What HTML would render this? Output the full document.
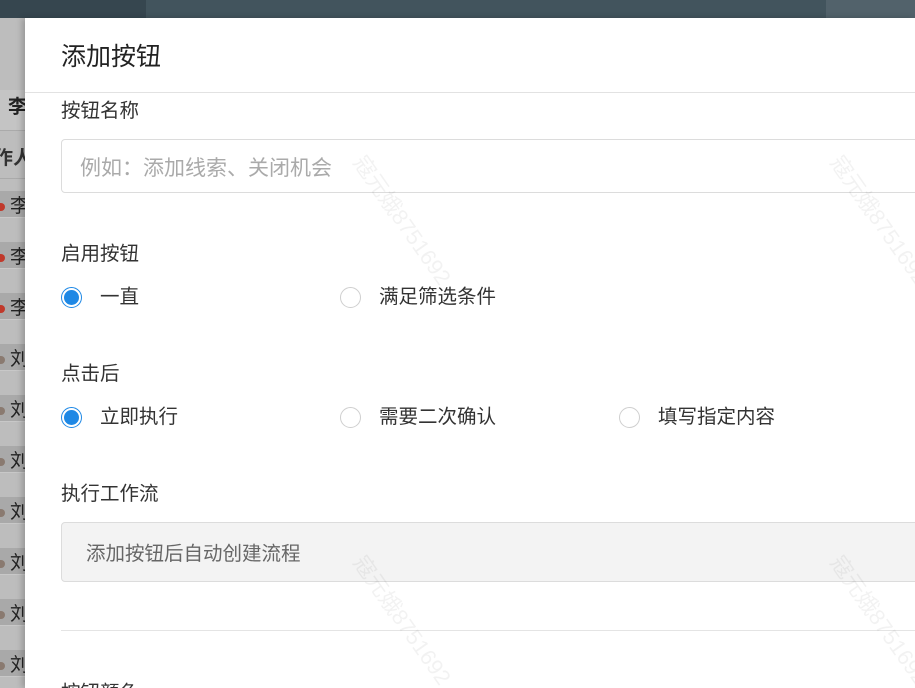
<!DOCTYPE html>
<html><head><meta charset="utf-8">
<style>
*{margin:0;padding:0;box-sizing:border-box}
html,body{width:915px;height:688px;overflow:hidden}
body{position:relative;background:#b4b4b4;font-family:"Liberation Sans","Noto Sans CJK SC",sans-serif;}
.top{position:absolute;left:0;top:0;width:915px;height:18px;background:#42545d}
.top .a{position:absolute;left:0;top:0;width:146px;height:18px;background:#36464f}
.top .b{position:absolute;left:826px;top:0;width:89px;height:18px;background:#52626b}
.side{position:absolute;left:0;top:18px;width:25px;height:670px;background:#bdbdbd;overflow:hidden}
.side div{position:absolute;left:0;width:25px;font-size:19px;color:#222;white-space:nowrap}
.row{height:27px;background:#a9a9a9;border-bottom:1px solid #c8c8c8}
.dot{display:inline-block;width:5px;height:8px;background:#c0392b;border-radius:0 4px 4px 0;vertical-align:middle;margin-right:5px}
.dot.g{background:#8a7a70}
.modal{position:absolute;left:25px;top:18px;width:890px;height:670px;background:#fff;box-shadow:-3px 0 6px rgba(0,0,0,.2);overflow:hidden}
.title{position:absolute;left:36px;top:19px;font-size:25px;color:#222}
.hr{position:absolute;left:0;top:74px;width:900px;height:1px;background:#e2e2e2}
.lbl{position:absolute;left:36px;font-size:19.5px;color:#333}
.input{position:absolute;left:36px;width:880px;border:1px solid #dcdcdc;border-radius:4px;font-size:19.5px}
.radio{position:absolute;font-size:19.5px;color:#333;height:22px;line-height:22px}
.radio i{position:absolute;left:0;top:1px;width:21px;height:21px;border-radius:50%;border:1px solid #cfcfcf;background:#fff}
.radio i.on{border-color:#1e88e5}
.radio i.on:after{content:"";position:absolute;left:2px;top:2px;width:15px;height:15px;border-radius:50%;background:#1e88e5}
.radio span{position:absolute;left:39px;top:0;white-space:nowrap}
.wm{position:absolute;font-size:22px;color:rgba(0,0,0,.05);transform:rotate(55deg);transform-origin:0 0;white-space:nowrap}
</style></head><body>
<div class="top"><div class="a"></div><div class="b"></div></div>
<div class="side">
<div style="top:72px;height:40px;background:#c4c4c4;font-weight:bold;padding:2px 0 0 8px">李</div>
<div style="top:112px;height:1px;background:#aaa"></div>
<div style="top:125px;font-weight:bold;left:-6px;color:#333">作人</div>
<div style="top:160px;height:1px;background:#aaa"></div>
<div class="row" style="top:173px;"><span class="dot"></span>李</div>
<div class="row" style="top:224px;"><span class="dot"></span>李</div>
<div class="row" style="top:275px;"><span class="dot"></span>李</div>
<div class="row" style="top:326px;"><span class="dot g"></span>刘</div>
<div class="row" style="top:377px;"><span class="dot g"></span>刘</div>
<div class="row" style="top:428px;"><span class="dot g"></span>刘</div>
<div class="row" style="top:479px;"><span class="dot g"></span>刘</div>
<div class="row" style="top:530px;"><span class="dot g"></span>刘</div>
<div class="row" style="top:581px;"><span class="dot g"></span>刘</div>
<div class="row" style="top:632px;"><span class="dot g"></span>刘</div>
</div>
<div class="modal">
<div class="title">添加按钮</div>
<div class="hr"></div>
<div class="lbl" style="top:76px">按钮名称</div>
<div class="input" style="top:121px;height:54px;padding:12px 0 0 18px;color:#aaa;font-size:21px">例如：添加线索、关闭机会</div>
<div class="lbl" style="top:219px">启用按钮</div>
<div class="radio" style="left:36px;top:268px"><i class="on"></i><span>一直</span></div>
<div class="radio" style="left:315px;top:268px"><i></i><span>满足筛选条件</span></div>
<div class="lbl" style="top:339px">点击后</div>
<div class="radio" style="left:36px;top:388px"><i class="on"></i><span>立即执行</span></div>
<div class="radio" style="left:315px;top:388px"><i></i><span>需要二次确认</span></div>
<div class="radio" style="left:594px;top:388px"><i></i><span>填写指定内容</span></div>
<div class="lbl" style="top:459px">执行工作流</div>
<div class="input" style="top:504px;height:60px;padding:14px 0 0 24px;background:#f3f3f3;color:#666">添加按钮后自动创建流程</div>
<div style="position:absolute;left:36px;top:612px;width:880px;height:1px;background:#e4e4e4"></div>
<div class="lbl" style="top:658px">按钮颜色</div>
<div class="wm" style="left:348px;top:130px">寇元娥8751692</div>
<div class="wm" style="left:825px;top:130px">寇元娥8751692</div>
<div class="wm" style="left:348px;top:530px">寇元娥8751692</div>
<div class="wm" style="left:825px;top:530px">寇元娥8751692</div>
</div>
</body></html>
